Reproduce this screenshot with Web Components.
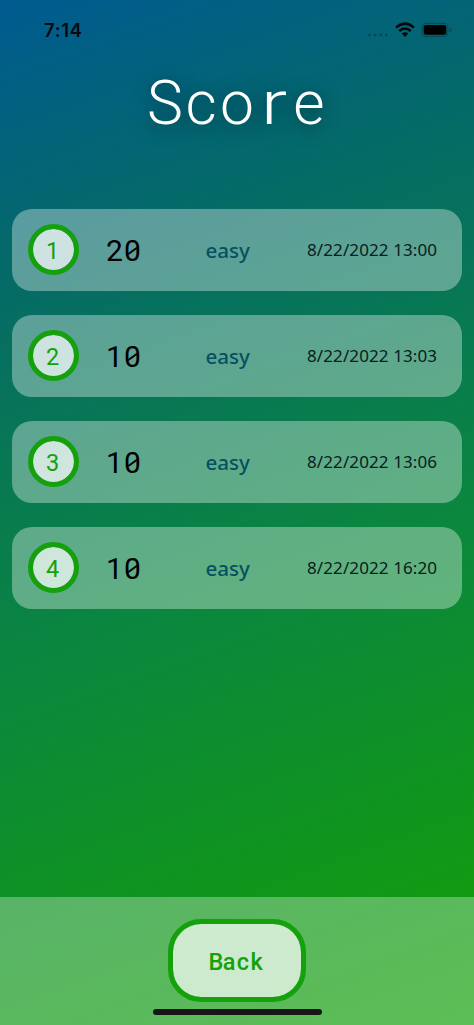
<!DOCTYPE html>
<html lang="en">
<head>
<meta charset="utf-8">
<title>Score</title>
<style>
html,body{margin:0;height:100%}
body{font-family:Roboto,sans-serif;overflow:hidden}
</style>
</head>
<body>
<score-screen></score-screen>
<script>
const define = (name, html, setup) => customElements.define(name, class extends HTMLElement {
  connectedCallback() {
    if (this.shadowRoot) return;
    this.attachShadow({mode: 'open'}).innerHTML = html;
    if (setup) setup(this.shadowRoot, this);
  }
});

define('status-bar', `
<style>
:host{display:flex;justify-content:space-between;height:60px;padding:0 22px 0 44px;box-sizing:border-box;color:#06090c}
time{font:600 18.500px/20px Inter,sans-serif;padding-top:20px;letter-spacing:.6px}
svg{display:block;margin-top:20px}
</style>
<time>7:14</time>
<svg width="86" height="20" viewBox="366 20 86 20">
  <g fill="#06485c"><circle cx="369.5" cy="35" r="1.5"/><circle cx="375" cy="35" r="1.5"/><circle cx="380.7" cy="35" r="1.5"/><circle cx="386.3" cy="35" r="1.5"/></g>
  <g fill="none" stroke="#06090c" stroke-width="2.6"><path d="M396 27.6Q405 19.6 414 27.6"/><path d="M399.2 31Q405 26 410.800 31"/></g>
  <path d="M401.7 33.6Q405 31 408.300 33.600L405 37Z" fill="#06090c"/>
  <rect x="422" y="23.300" width="26" height="13" rx="4" fill="none" stroke="#064652" stroke-width="1"/>
  <rect x="423.700" y="25" width="22.600" height="9.700" rx="2.300" fill="#000"/>
  <path d="M450 28v4q1.500-.6 1.500-2t-1.500-2z" fill="#064652"/>
</svg>`);

define('screen-title', `
<style>
:host{display:flex;justify-content:center;height:149px;box-sizing:border-box;padding-top:7px}
h1{margin:0;font-weight:300;font-size:60.500px;line-height:74px;color:#fff;white-space:nowrap;text-shadow:0 3px 18px rgba(0,0,0,.5)}
span{display:inline-block;width:36px;text-align:center}
.wide{transform:translateX(1px) scaleX(1.28)}
</style>
<h1><span>S</span><span>c</span><span>o</span><span class="wide">r</span><span>e</span></h1>`);

define('rank-badge', `
<style>
:host{display:grid;place-items:center;width:51px;height:51px;box-sizing:border-box;border:5px solid #14a10b;border-radius:50%;background:rgba(255,255,255,.7);background-clip:padding-box;color:#14a10b;font-size:23.500px;font-weight:400;line-height:28px;padding:2px 2px 0 0}
</style><slot></slot>`);

define('score-row', `
<style>
:host{display:grid;grid-template-columns:51px 26.500px 100px 101.500px 1fr;align-items:center;height:82px;box-sizing:border-box;padding:0 25px 0 16px;border-radius:20px;background:rgba(255,255,255,.35)}
.points{grid-column:3;font-size:30px;line-height:36px;padding-top:2px;color:#000;white-space:nowrap;font-weight:400}
.points span{display:inline-block;width:18px;text-align:center;position:relative}
.zero::after{content:"";position:absolute;left:3.500px;top:17px;width:11px;height:2px;background:#000;transform:rotate(-36deg)}
.level{font:500 20.600px/30px "Noto Sans",sans-serif;color:#04515f}
time{font:17px/26px "Noto Sans",sans-serif;letter-spacing:.1px;color:#07201d;white-space:nowrap}
</style>
<rank-badge></rank-badge><div class="points"></div><div class="level">easy</div><time></time>`, (root, el) => {
  root.querySelector('rank-badge').textContent = el.getAttribute('rank');
  root.querySelector('.points').innerHTML = [...el.getAttribute('points')].map(c => `<span${c === '0' ? ' class="zero"' : ''}>${c}</span>`).join('');
  root.querySelector('time').textContent = el.getAttribute('date');
});

define('back-footer', `
<style>
:host{display:flex;flex-direction:column;align-items:center;height:128.500px;box-sizing:border-box;padding-top:22.500px;background:rgba(255,255,255,.31)}
button{width:138px;height:83px;box-sizing:border-box;border:5px solid #14a10b;border-radius:33px;background:rgba(255,255,255,.7);background-clip:padding-box;padding:3px 2px 0 0;margin:0;font:500 23.500px/30px Roboto,sans-serif;color:#14a10b}
span{display:inline-block;width:13.8px;text-align:center}
i{display:block;width:169px;height:6px;border-radius:3px;background:#141716;margin-top:7px}
</style>
<button><span>B</span><span>a</span><span>c</span><span>k</span></button><i></i>`);

define('score-screen', `
<style>
:host{display:flex;flex-direction:column;height:1025px;background:linear-gradient(160deg,#005a90 0%,#056b66 24%,#0b863f 56%,#129c0e 92%,#14a20b 100%)}
main{flex:1;display:flex;flex-direction:column;gap:24px;padding:0 12px;margin-top:-.4px}
</style>
<status-bar></status-bar>
<screen-title></screen-title>
<main>
<score-row rank="1" points="20" date="8/22/2022 13:00"></score-row>
<score-row rank="2" points="10" date="8/22/2022 13:03"></score-row>
<score-row rank="3" points="10" date="8/22/2022 13:06"></score-row>
<score-row rank="4" points="10" date="8/22/2022 16:20"></score-row>
</main>
<back-footer></back-footer>`);
</script>
</body>
</html>
